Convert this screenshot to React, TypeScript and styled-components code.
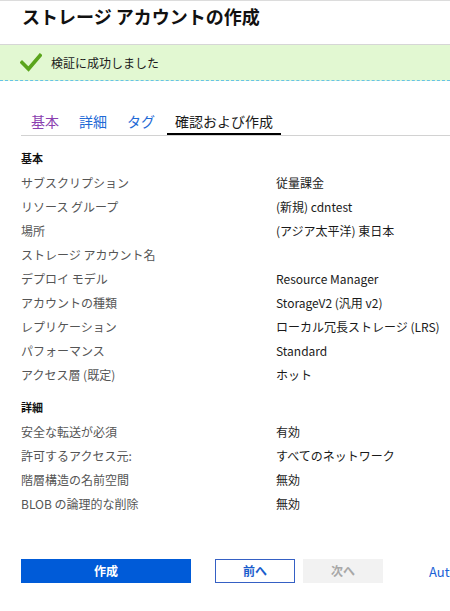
import styled, { createGlobalStyle } from "styled-components";

const GlobalStyle = createGlobalStyle`
    html, body {
        margin: 0;
        padding: 0;
        background: #ffffff;
        overflow: hidden;
    }
    body {
        font-family: "Noto Sans CJK JP", "Noto Sans", sans-serif;
        color: #1a1a1a;
    }
`;

type Row = { label: string; value: string };

const BASIC_ROWS: Row[] = [
    { label: "サブスクリプション", value: "従量課金" },
    { label: "リソース グループ", value: "(新規) cdntest" },
    { label: "場所", value: "(アジア太平洋) 東日本" },
    { label: "ストレージ アカウント名", value: "" },
    { label: "デプロイ モデル", value: "Resource Manager" },
    { label: "アカウントの種類", value: "StorageV2 (汎用 v2)" },
    { label: "レプリケーション", value: "ローカル冗長ストレージ (LRS)" },
    { label: "パフォーマンス", value: "Standard" },
    { label: "アクセス層 (既定)", value: "ホット" },
];

const DETAIL_ROWS: Row[] = [
    { label: "安全な転送が必須", value: "有効" },
    { label: "許可するアクセス元:", value: "すべてのネットワーク" },
    { label: "階層構造の名前空間", value: "無効" },
    { label: "BLOB の論理的な削除", value: "無効" },
];

type TabState = "visited" | "link" | "active";

const TABS: { name: string; state: TabState }[] = [
    { name: "基本", state: "visited" },
    { name: "詳細", state: "link" },
    { name: "タグ", state: "link" },
    { name: "確認および作成", state: "active" },
];

const CheckIcon = () => (
    <svg width="22" height="20" viewBox="0 0 22 20">
        <polyline
            points="2,9.5 8.5,16 20,2.5"
            fill="none"
            stroke="#5aa51c"
            strokeWidth="3.6"
            strokeLinecap="square"
            strokeLinejoin="miter"
        />
    </svg>
);

const Summary = ({ title, rows, first }: { title: string; rows: Row[]; first?: boolean }) => (
    <Section $first={first}>
        <SectionTitle>{title}</SectionTitle>
        {rows.map((row) => (
            <SummaryRow key={row.label}>
                <Label>{row.label}</Label>
                <Value>{row.value}</Value>
            </SummaryRow>
        ))}
    </Section>
);

const App = () => {
    return (
        <>
            <GlobalStyle />
            <Page>
                <Header>
                    <Title>ストレージ アカウントの作成</Title>
                </Header>
                <Banner>
                    <CheckIcon />
                    <BannerText>検証に成功しました</BannerText>
                </Banner>
                <TabList>
                    {TABS.map((tab) => (
                        <Tab key={tab.name} $state={tab.state}>
                            {tab.name}
                        </Tab>
                    ))}
                </TabList>
                <Summary title="基本" rows={BASIC_ROWS} first />
                <Summary title="詳細" rows={DETAIL_ROWS} />
                <Footer>
                    <PrimaryButton>作成</PrimaryButton>
                    <NavButtons>
                        <OutlineButton>前へ</OutlineButton>
                        <DisabledButton>次へ</DisabledButton>
                    </NavButtons>
                    <FooterLink>Automation のテンプレートをダウンロード</FooterLink>
                </Footer>
            </Page>
        </>
    );
};

export default App;

const Page = styled.div`
    width: 450px;
    height: 611px;
    border-top: 1px solid #dcdcdc;
    box-sizing: border-box;
    overflow: hidden;
`;

const Header = styled.header`
    height: 43px;
    padding-left: 22px;
`;

const Title = styled.h1`
    margin: 0;
    font-size: 18px;
    font-weight: bold;
    line-height: 30px;
    color: #111111;
    white-space: nowrap;
`;

const Banner = styled.div`
    height: 35px;
    display: flex;
    align-items: center;
    gap: 9px;
    padding-left: 20px;
    background: #e2f8d2;
    border-top: 1px solid #d6d6d6;
    border-bottom: 1px dashed #66c3e6;
`;

const BannerText = styled.span`
    font-size: 12px;
    color: #1a1a1a;
    line-height: 16px;
`;

const TabList = styled.nav`
    display: flex;
    gap: 4px;
    margin: 22px 0 0 21px;
    padding-left: 2px;
    border-bottom: 1px solid #d2d2d2;
`;

const tabColor = (state: TabState) =>
    state === "visited" ? "#8b3fb0" : state === "link" ? "#1f6ad6" : "#1a1a1a";

const Tab = styled.a<{ $state: TabState }>`
    padding: 8px 8px 2px;
    font-size: 14px;
    line-height: 20px;
    color: ${({ $state }) => tabColor($state)};
    border-bottom: 2px solid
        ${({ $state }) => ($state === "active" ? "#000000" : "transparent")};
    cursor: pointer;
    white-space: nowrap;
`;

const Section = styled.section<{ $first?: boolean }>`
    padding-left: 21px;
    margin-top: ${({ $first }) => ($first ? "10px" : "8px")};
`;

const SectionTitle = styled.h2`
    margin: 0 0 1px;
    font-size: 11px;
    font-weight: bold;
    line-height: 24px;
    color: #111111;
`;

const SummaryRow = styled.div`
    display: grid;
    grid-template-columns: 255px 1fr;
    height: 24px;
    align-items: center;
    font-size: 12px;
    line-height: 24px;
    white-space: nowrap;
`;

const Label = styled.span`
    color: #555555;
`;

const Value = styled.span`
    color: #1a1a1a;
`;

const Footer = styled.footer`
    display: flex;
    align-items: center;
    margin-top: 43px;
    padding-left: 21px;
    white-space: nowrap;
`;

const BaseButton = styled.button`
    flex-shrink: 0;
    height: 24px;
    box-sizing: border-box;
    padding: 0;
    font-family: "Noto Sans CJK JP", "Noto Sans", sans-serif;
    font-size: 12px;
    font-weight: bold;
    line-height: 22px;
    border-radius: 0;
    cursor: pointer;
`;

const PrimaryButton = styled(BaseButton)`
    width: 170px;
    background: #005bd8;
    border: 1px solid #005bd8;
    color: #ffffff;
`;

const NavButtons = styled.div`
    display: flex;
    flex-shrink: 0;
    gap: 8px;
    margin-left: 24px;
`;

const OutlineButton = styled(BaseButton)`
    width: 80px;
    background: #ffffff;
    border: 1px solid #3560c4;
    color: #1a5dcc;
`;

const DisabledButton = styled(BaseButton)`
    width: 80px;
    background: #f2f2f2;
    border: 1px solid #f2f2f2;
    color: #a8a8a8;
    cursor: default;
`;

const FooterLink = styled.a`
    flex-shrink: 0;
    margin-left: 46px;
    font-size: 13px;
    color: #1a62d6;
    cursor: pointer;
`;
